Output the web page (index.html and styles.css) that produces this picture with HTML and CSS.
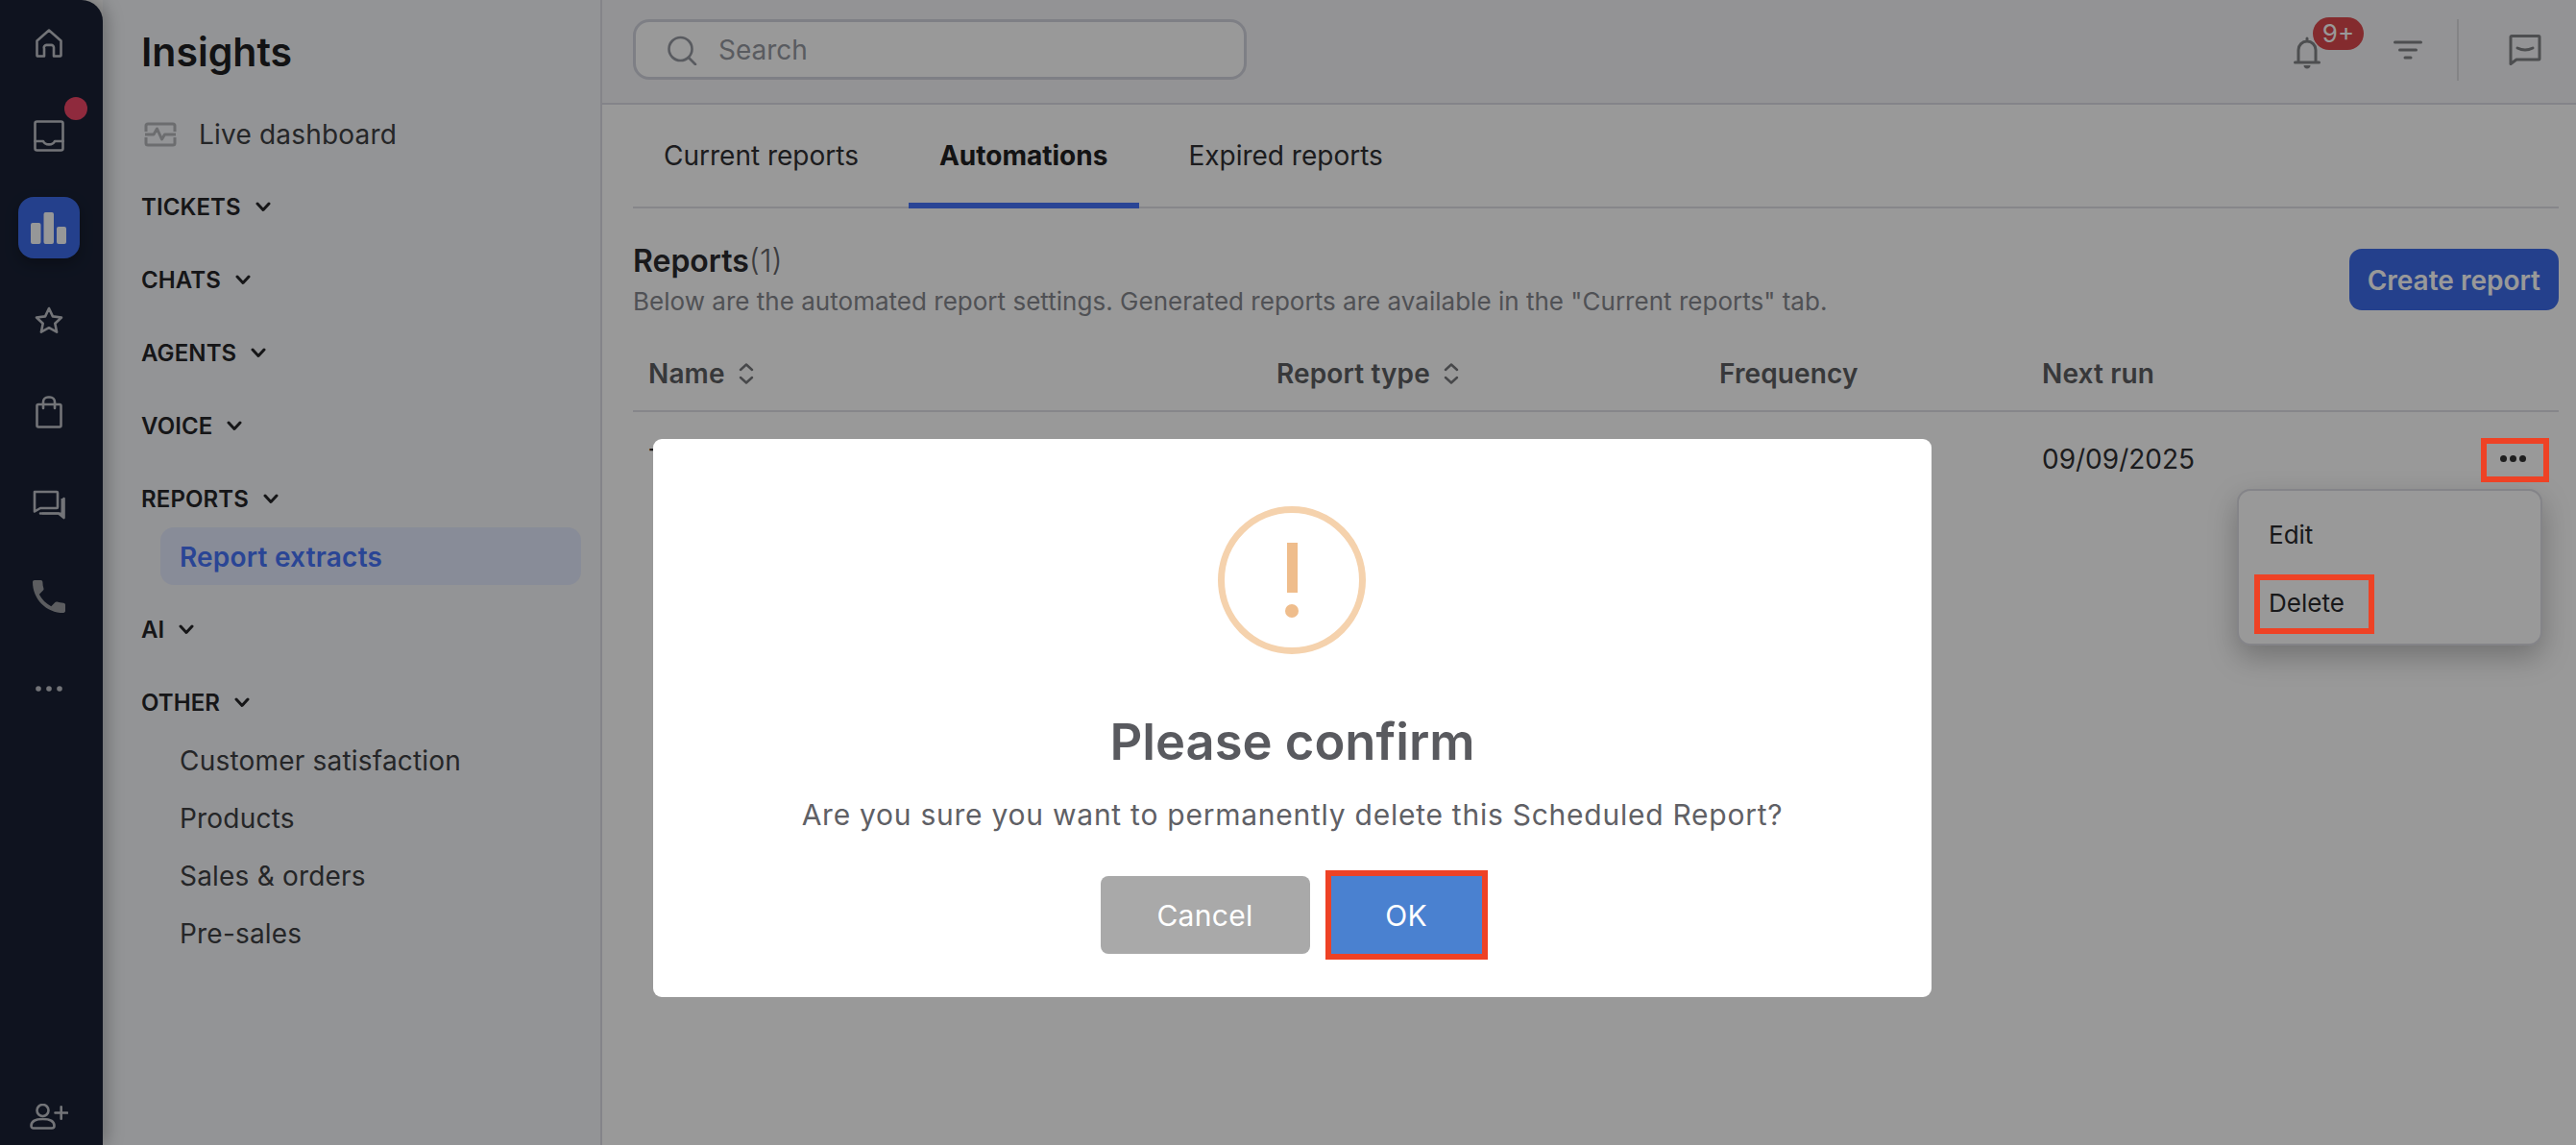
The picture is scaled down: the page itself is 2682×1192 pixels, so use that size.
FILE: index.html
```html
<!DOCTYPE html>
<html lang="en">
<head>
<meta charset="utf-8">
<title>Insights</title>
<link rel="stylesheet" href="styles.css">
</head>
<body>
<div class="app">
  <nav class="rail">
    <div class="rail-slot"><svg class="ico" width="28" height="30" viewBox="0 0 28 30"><path d="M1.500 12.500 14 1.500l12.500 11v15.200a.8.8 0 0 1-.8.8H19v-9a2.600 2.600 0 0 0-2.600-2.600h-4.800A2.600 2.600 0 0 0 9 20.500v8H2.300a.8.8 0 0 1-.8-.8z"/></svg></div>
    <div class="rail-slot"><svg class="ico" width="32" height="33" viewBox="0 0 32 33"><rect x="1.500" y="1.500" width="29" height="30" rx="2"/><path d="M1.500 22H10c2 4.500 10 4.500 12 0h8.500"/></svg><span class="rail-dot"></span></div>
    <div class="rail-slot rail-active"><svg width="38" height="34" viewBox="0 0 38 34" class="bars"><rect x="0" y="11" width="10.500" height="22" rx="2"/><rect x="13.500" y="0" width="10.500" height="33" rx="2"/><rect x="27" y="15" width="10" height="18" rx="2"/></svg></div>
    <div class="rail-slot"><svg class="ico" width="30" height="29" viewBox="0 0 30 29"><path d="m15 2 3.900 8.400 9.100 1.100-6.700 6.200 1.800 9-8.100-4.500-8.100 4.500 1.800-9L2 11.500l9.100-1.100z"/></svg></div>
    <div class="rail-slot"><svg class="ico" width="28" height="34" viewBox="0 0 28 34"><rect x="1.500" y="9" width="25" height="23.500" rx="1.500"/><path d="M8 13V6.500a5 5 0 0 1 5-5h2a5 5 0 0 1 5 5V13"/></svg></div>
    <div class="rail-slot"><svg class="ico" width="34" height="31" viewBox="0 0 34 31"><path d="M2 2h23a1 1 0 0 1 1 1v15a1 1 0 0 1-1 1H8l-6 3.500z"/><path d="M8 24.500h19l5.500 4.500V9"/><path class="ico-fill" d="M29.500 9h3.500v21l-6-4.500h-17v-2h19.500z"/></svg></div>
    <div class="rail-slot"><svg class="ico-solid" width="34" height="34" viewBox="3 3 18 18"><path d="M6.620 10.790c1.440 2.830 3.760 5.140 6.590 6.590l2.200-2.200c.27-.27.67-.36 1.020-.24 1.120.37 2.330.57 3.570.57.550 0 1 .45 1 1V20c0 .55-.45 1-1 1-9.390 0-17-7.610-17-17 0-.55.45-1 1-1h3.500c.55 0 1 .45 1 1 0 1.250.2 2.450.57 3.570.11.35.03.74-.25 1.020z"/></svg></div>
    <div class="rail-slot"><svg class="ico-solid" width="28" height="6" viewBox="0 0 28 6"><circle cx="3" cy="3" r="2.800"/><circle cx="14" cy="3" r="2.800"/><circle cx="25" cy="3" r="2.800"/></svg></div>
    <div class="rail-slot rail-bottom"><svg class="ico" width="40" height="27" viewBox="0 0 40 27"><circle cx="13.500" cy="7" r="6"/><path d="M1.500 23c0-5 5.500-7 12-7s12 2 12 7c0 1.500-1 2.500-2.500 2.500H4c-1.500 0-2.500-1-2.500-2.500z"/><path d="M26.500 9.500h12.500M32.700 3.200v12.600"/></svg></div>
  </nav>

  <aside class="sidebar">
    <h1 class="side-title">Insights</h1>
    <a class="side-live"><svg width="34" height="26" viewBox="0 0 34 26" class="live-ico"><path d="M2 10V4a2 2 0 0 1 2-2h26a2 2 0 0 1 2 2v6M2 16v6a2 2 0 0 0 2 2h26a2 2 0 0 0 2-2v-6M1 13h9l3.500-6 5 11 3-5h11.500"/></svg><span>Live dashboard</span></a>
    <div class="side-head">TICKETS<svg class="chev" width="16" height="11" viewBox="0 0 16 11"><path d="m2 2 6 6.500L14 2"/></svg></div>
    <div class="side-head">CHATS<svg class="chev" width="16" height="11" viewBox="0 0 16 11"><path d="m2 2 6 6.500L14 2"/></svg></div>
    <div class="side-head">AGENTS<svg class="chev" width="16" height="11" viewBox="0 0 16 11"><path d="m2 2 6 6.500L14 2"/></svg></div>
    <div class="side-head">VOICE<svg class="chev" width="16" height="11" viewBox="0 0 16 11"><path d="m2 2 6 6.500L14 2"/></svg></div>
    <div class="side-head">REPORTS<svg class="chev" width="16" height="11" viewBox="0 0 16 11"><path d="m2 2 6 6.500L14 2"/></svg></div>
    <a class="side-item side-item-active">Report extracts</a>
    <div class="side-head">AI<svg class="chev" width="16" height="11" viewBox="0 0 16 11"><path d="m2 2 6 6.500L14 2"/></svg></div>
    <div class="side-head">OTHER<svg class="chev" width="16" height="11" viewBox="0 0 16 11"><path d="m2 2 6 6.500L14 2"/></svg></div>
    <a class="side-item">Customer satisfaction</a>
    <a class="side-item">Products</a>
    <a class="side-item">Sales &amp; orders</a>
    <a class="side-item">Pre-sales</a>
  </aside>

  <main class="main">
    <header class="topbar">
      <div class="search">
        <svg class="search-ico" width="32" height="31" viewBox="0 0 32 31"><circle cx="14.500" cy="14" r="12"/><path d="m23 23 7 7"/></svg>
        <span>Search</span>
      </div>
      <div class="top-actions">
        <div class="bell">
          <svg class="top-ico" width="28" height="34" viewBox="0 0 28 34"><path d="M5 26V14a9 9 0 0 1 18 0v12M1.500 27h25M14 2v3"/><path class="top-fill" d="M10.500 30h7c0 2-1.500 3.500-3.500 3.500s-3.500-1.500-3.500-3.500z"/></svg>
          <span class="badge">9+</span>
        </div>
        <svg class="top-ico filter" width="30" height="20" viewBox="0 0 30 20"><path d="M1.500 2h27M6.500 10h17M12 18h6"/></svg>
        <span class="top-divider"></span>
        <svg class="top-ico" width="34" height="32" viewBox="0 0 34 32"><path d="M2 2.500a1 1 0 0 1 1-1h28a1 1 0 0 1 1 1V25a1 1 0 0 1-1 1H8l-6 4.500z"/><path d="M9 14c5 2.500 11 2.500 16 0"/></svg>
      </div>
    </header>

    <div class="content">
      <div class="tabs">
        <div class="tab">Current reports</div>
        <div class="tab tab-active">Automations</div>
        <div class="tab">Expired reports</div>
      </div>

      <div class="head">
        <div>
          <div class="head-title"><b>Reports</b><span>(1)</span></div>
          <div class="head-sub">Below are the automated report settings. Generated reports are available in the "Current reports" tab.</div>
        </div>
        <button class="create">Create report</button>
      </div>

      <div class="tbl-head">
        <div class="th">Name<svg class="sort" width="16" height="22" viewBox="0 0 16 22"><path d="m2 7 6-5.500L14 7M2 15l6 5.500L14 15"/></svg></div>
        <div class="th">Report type<svg class="sort" width="16" height="22" viewBox="0 0 16 22"><path d="m2 7 6-5.500L14 7M2 15l6 5.500L14 15"/></svg></div>
        <div class="th">Frequency</div>
        <div class="th">Next run</div>
      </div>
      <div class="tbl-row">
        <div>Test</div>
        <div></div>
        <div></div>
        <div>09/09/2025</div>
        <div class="more"><i></i><i></i><i></i></div>
        <div class="menu">
          <div class="menu-item">Edit</div>
          <div class="menu-item">Delete</div>
        </div>
      </div>
    </div>
  </main>
</div>

<div class="overlay"></div>

<section class="modal">
  <div class="alert"><span class="alert-bar"></span><span class="alert-dot"></span></div>
  <h2 class="modal-title">Please confirm</h2>
  <p class="modal-text">Are you sure you want to permanently delete this Scheduled Report?</p>
  <div class="modal-actions">
    <button class="btn btn-cancel">Cancel</button>
    <button class="btn btn-ok">OK</button>
  </div>
</section>

<div class="mark mark-more"></div>
<div class="mark mark-delete"></div>
</body>
</html>
```
FILE: styles.css
```css
* { box-sizing: border-box; }
html, body { margin: 0; height: 100%; overflow: hidden; }
body { font-family: Inter, "Liberation Sans", sans-serif; color: #2f2f32; background: #fff; }
.app { display: flex; width: 2682px; height: 1192px; }

/* Rail */
.rail { width: 107px; flex: none; height: 100%; background: #192135; border-top-right-radius: 22px; display: flex; flex-direction: column; align-items: center; gap: 32px; padding: 13px 5px 10px 0; position: relative; z-index: 1; box-shadow: 4px 0 18px rgba(0,0,0,.28); }
.rail-slot { width: 64px; height: 64px; display: flex; align-items: center; justify-content: center; position: relative; flex: none; }
.rail-active { background: #3c6be9; border-radius: 16px; box-shadow: 0 6px 14px rgba(0,0,0,.25); }
.rail-bottom { margin-top: auto; height: 40px; }
.rail-dot { position: absolute; left: 48px; top: -8px; width: 24px; height: 24px; border-radius: 50%; background: #ee4666; }
.ico { fill: none; stroke: #c0c2c8; stroke-width: 2.6; stroke-linejoin: round; stroke-linecap: round; }
.ico .ico-fill { fill: #c0c2c8; stroke: none; }
.ico-solid { fill: #9a9ca0; }
.rail-slot:nth-child(8) .ico-solid { fill: #c0c2c8; }
.bars { fill: #fff; opacity: .98; margin-top: 2px; }

/* Sidebar */
.sidebar { width: 520px; flex: none; height: 100%; background: #f5f7fa; border-right: 2px solid #dcdde4; padding: 24px 20px 0 40px; display: flex; flex-direction: column; }
.side-title { margin: 0 0 26px; height: 60px; line-height: 60px; font-size: 41px; font-weight: 600; color: #1f1f22; }
.side-live { height: 60px; margin-bottom: 15px; display: flex; align-items: center; gap: 23px; padding-left: 3px; font-size: 28px; letter-spacing: .2px; color: #3e4043; }
.live-ico { fill: none; stroke: #b4b6ba; stroke-width: 3; stroke-linejoin: round; }
.side-head { height: 60px; margin-bottom: 16px; display: flex; align-items: center; gap: 15px; font-size: 24px; font-weight: 600; letter-spacing: .1px; color: #262628; }
.side-head:has(+ .side-item) { margin-bottom: 0; }
.chev { fill: none; stroke: #262628; stroke-width: 3; stroke-linecap: round; stroke-linejoin: round; }
.side-item { height: 60px; flex: none; display: flex; align-items: center; margin-left: 20px; padding: 2px 0 0 20px; border-radius: 14px; font-size: 28px; letter-spacing: .2px; color: #3e4043; }
.side-item-active { background: #e3e9fd; color: #4673f8; font-weight: 600; margin-bottom: 16px; }

/* Main */
.main { flex: 1; min-width: 0; display: flex; flex-direction: column; }
.topbar { height: 109px; flex: none; background: #f5f6f8; border-bottom: 2px solid #dcdde4; padding: 20px 36px 0 32px; display: flex; justify-content: space-between; align-items: flex-start; }
.search { width: 639px; height: 63px; border: 3px solid #d3d4de; border-radius: 17px; background: #fff; display: flex; align-items: center; gap: 22px; padding: 1px 0 0 32px; font-size: 28px; color: #9598a0; }
.search-ico { fill: none; stroke: #9598a0; stroke-width: 2.6; stroke-linecap: round; }
.top-actions { display: flex; align-items: center; height: 64px; }
.bell { position: relative; width: 28px; height: 34px; margin-right: 76px; top: 3px; }
.top-ico { fill: none; stroke: #818286; stroke-width: 3; stroke-linecap: round; stroke-linejoin: round; display: block; }
.top-fill { fill: #818286; stroke: none; }
.badge { position: absolute; left: 20px; top: -20px; width: 53px; height: 34px; border-radius: 17px; background: #dc494d; color: #fff; font-size: 26px; line-height: 34px; text-align: center; }
.filter { margin-top: 0; }
.top-divider { width: 2px; height: 64px; background: #dcdde0; margin: 0 52px 0 36px; }

.content { flex: 1; padding: 0 18px 0 32px; }
.tabs { display: flex; gap: 20px; height: 108px; border-bottom: 2px solid #e0e0e6; }
.tab { padding: 0 32px; height: 108px; line-height: 106px; font-size: 28px; color: #303033; }
.tab-active { font-weight: 700; color: #202022; border-bottom: 6px solid #4673f8; padding-right: 33px; margin-right: -1px; }
.head { display: flex; justify-content: space-between; align-items: flex-start; padding-top: 35px; height: 130px; }
.head-title { font-size: 32px; line-height: 40px; }
.head-title b { font-weight: 600; color: #2a2a2d; }
.head-title span { font-weight: 300; color: #646569; }
.head-sub { font-size: 26px; line-height: 44px; letter-spacing: .02px; color: #86888e; }
.create { margin-top: 7px; height: 64px; padding: 2px 19px 0; border: 0; border-radius: 13px; background: #3c6be9; color: #fff; font: 600 28px Inter, "Liberation Sans", sans-serif; }
.tbl-head, .tbl-row { display: grid; grid-template-columns: 654px 461px 336px 1fr 96px; padding-left: 16px; align-items: center; }
.tbl-head { height: 82px; padding-top: 3px; border-bottom: 2px solid #e0e0e6; grid-template-columns: 654px 461px 336px 1fr; }
.th { display: flex; align-items: center; gap: 14px; font-size: 28px; font-weight: 600; letter-spacing: .12px; color: #5c5e62; }
.sort { fill: none; stroke: #77787c; stroke-width: 2.4; stroke-linecap: round; stroke-linejoin: round; }
.tbl-row { height: 96px; padding-top: 1px; font-size: 28px; color: #303033; position: relative; }
.more { display: flex; gap: 3px; justify-content: flex-end; margin-right: 34px; }
.more i { width: 7px; height: 7px; border-radius: 50%; background: #333; }
.menu { position: absolute; right: 17px; top: 80px; width: 318px; height: 163px; background: #fff; border: 2px solid #dcdce3; border-radius: 14px; box-shadow: 0 12px 30px rgba(0,0,0,.26); padding: 10px 0 0 31px; display: flex; flex-direction: column; }
.menu-item { height: 71px; display: flex; align-items: center; font-size: 26px; color: #2a2a2d; }

/* Overlay and dialog */
.overlay { position: absolute; inset: 0; background: rgba(0,0,0,.4); z-index: 2; }
.modal { position: absolute; left: 680px; top: 457px; width: 1331px; height: 581px; background: #fff; border-radius: 9px; z-index: 3; padding-top: 70px; display: flex; flex-direction: column; align-items: center; }
.alert { width: 154px; height: 154px; margin-right: 1px; border: 7px solid #f5d2ad; border-radius: 50%; display: flex; flex-direction: column; align-items: center; padding-top: 31px; flex: none; }
.alert-bar { width: 11px; height: 52px; background: #efbd8c; }
.alert-dot { width: 14px; height: 14px; border-radius: 50%; background: #efbd8c; margin-top: 12px; }
.modal-title { margin: 56px 0 0; height: 70px; line-height: 70px; font-size: 52.500px; font-weight: 600; color: #595a5f; }
.modal-text { margin: 19px 0 0; height: 44px; line-height: 44px; font-size: 30px; letter-spacing: .75px; color: #5f6065; }
.modal-actions { display: flex; gap: 22px; margin: 42px 3px 0 0; }
.btn { height: 81px; padding: 0; border: 0; color: #fff; font: 400 30px Inter, "Liberation Sans", sans-serif; letter-spacing: .3px; border-radius: 8px; }
.btn-cancel { width: 218px; background: #a9a9a9; }
.btn-ok { width: 157px; background: #4a81d0; outline: 6px solid #ee4225; border-radius: 0; }

.mark { position: absolute; border: 6px solid #ee4225; z-index: 3; }
.mark-more { left: 2583px; top: 456px; width: 71px; height: 46px; }
.mark-delete { left: 2347px; top: 598px; width: 125px; height: 62px; }
```
